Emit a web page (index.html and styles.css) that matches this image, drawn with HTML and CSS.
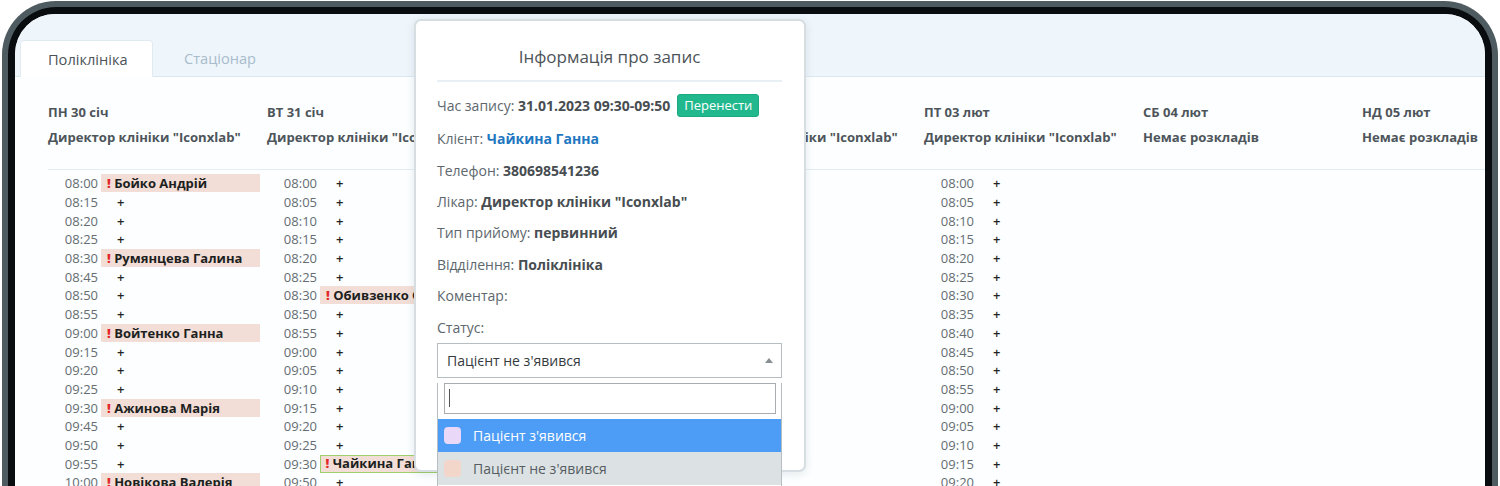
FILE: index.html
```html
<!DOCTYPE html>
<html lang="uk">
<head>
<meta charset="utf-8">
<title>Розклад</title>
<link rel="stylesheet" href="styles.css">
</head>
<body>
<div class="device">
  <div class="screen">
    <div class="tabs">
      <div class="tab active">Поліклініка</div>
      <div class="tab">Стаціонар</div>
    </div>

    <div class="schedule">
      <div class="head-row">
        <div class="day-head"><div class="day">ПН 30 січ</div><div class="doc">Директор клініки "Iconxlab"</div></div>
        <div class="day-head"><div class="day">ВТ 31 січ</div><div class="doc">Директор клініки "Iconxlab"</div></div>
        <div class="day-head"><div class="day">СР 01 лют</div><div class="doc">Директор клініки "Iconxlab"</div></div>
        <div class="day-head"><div class="day">ЧТ 02 лют</div><div class="doc">Директор клініки "Iconxlab"</div></div>
        <div class="day-head"><div class="day">ПТ 03 лют</div><div class="doc">Директор клініки "Iconxlab"</div></div>
        <div class="day-head"><div class="day">СБ 04 лют</div><div class="doc">Немає розкладів</div></div>
        <div class="day-head"><div class="day">НД 05 лют</div><div class="doc">Немає розкладів</div></div>
      </div>

      <div class="body-row">
        <div class="day-col">
          <div class="slot"><span class="time">08:00</span><span class="appt"><b class="warn">!</b> Бойко Андрій</span></div>
          <div class="slot"><span class="time">08:15</span><span class="free">+</span></div>
          <div class="slot"><span class="time">08:20</span><span class="free">+</span></div>
          <div class="slot"><span class="time">08:25</span><span class="free">+</span></div>
          <div class="slot"><span class="time">08:30</span><span class="appt"><b class="warn">!</b> Румянцева Галина</span></div>
          <div class="slot"><span class="time">08:45</span><span class="free">+</span></div>
          <div class="slot"><span class="time">08:50</span><span class="free">+</span></div>
          <div class="slot"><span class="time">08:55</span><span class="free">+</span></div>
          <div class="slot"><span class="time">09:00</span><span class="appt"><b class="warn">!</b> Войтенко Ганна</span></div>
          <div class="slot"><span class="time">09:15</span><span class="free">+</span></div>
          <div class="slot"><span class="time">09:20</span><span class="free">+</span></div>
          <div class="slot"><span class="time">09:25</span><span class="free">+</span></div>
          <div class="slot"><span class="time">09:30</span><span class="appt"><b class="warn">!</b> Ажинова Марія</span></div>
          <div class="slot"><span class="time">09:45</span><span class="free">+</span></div>
          <div class="slot"><span class="time">09:50</span><span class="free">+</span></div>
          <div class="slot"><span class="time">09:55</span><span class="free">+</span></div>
          <div class="slot"><span class="time">10:00</span><span class="appt"><b class="warn">!</b> Новікова Валерія</span></div>
        </div>
        <div class="day-col">
          <div class="slot"><span class="time">08:00</span><span class="free">+</span></div>
          <div class="slot"><span class="time">08:05</span><span class="free">+</span></div>
          <div class="slot"><span class="time">08:10</span><span class="free">+</span></div>
          <div class="slot"><span class="time">08:15</span><span class="free">+</span></div>
          <div class="slot"><span class="time">08:20</span><span class="free">+</span></div>
          <div class="slot"><span class="time">08:25</span><span class="free">+</span></div>
          <div class="slot"><span class="time">08:30</span><span class="appt"><b class="warn">!</b> Обивзенко Олег</span></div>
          <div class="slot"><span class="time">08:50</span><span class="free">+</span></div>
          <div class="slot"><span class="time">08:55</span><span class="free">+</span></div>
          <div class="slot"><span class="time">09:00</span><span class="free">+</span></div>
          <div class="slot"><span class="time">09:05</span><span class="free">+</span></div>
          <div class="slot"><span class="time">09:10</span><span class="free">+</span></div>
          <div class="slot"><span class="time">09:15</span><span class="free">+</span></div>
          <div class="slot"><span class="time">09:20</span><span class="free">+</span></div>
          <div class="slot"><span class="time">09:25</span><span class="free">+</span></div>
          <div class="slot"><span class="time">09:30</span><span class="appt selected"><b class="warn">!</b> Чайкина Ганна</span></div>
          <div class="slot"><span class="time">09:50</span><span class="free">+</span></div>
        </div>
        <div class="day-col">
          <div class="slot"><span class="time">08:00</span><span class="free">+</span></div>
          <div class="slot"><span class="time">08:05</span><span class="free">+</span></div>
          <div class="slot"><span class="time">08:10</span><span class="free">+</span></div>
        </div>
        <div class="day-col">
          <div class="slot"><span class="time">08:00</span><span class="free">+</span></div>
          <div class="slot"><span class="time">08:05</span><span class="free">+</span></div>
          <div class="slot"><span class="time">08:10</span><span class="free">+</span></div>
        </div>
        <div class="day-col">
          <div class="slot"><span class="time">08:00</span><span class="free">+</span></div>
          <div class="slot"><span class="time">08:05</span><span class="free">+</span></div>
          <div class="slot"><span class="time">08:10</span><span class="free">+</span></div>
          <div class="slot"><span class="time">08:15</span><span class="free">+</span></div>
          <div class="slot"><span class="time">08:20</span><span class="free">+</span></div>
          <div class="slot"><span class="time">08:25</span><span class="free">+</span></div>
          <div class="slot"><span class="time">08:30</span><span class="free">+</span></div>
          <div class="slot"><span class="time">08:35</span><span class="free">+</span></div>
          <div class="slot"><span class="time">08:40</span><span class="free">+</span></div>
          <div class="slot"><span class="time">08:45</span><span class="free">+</span></div>
          <div class="slot"><span class="time">08:50</span><span class="free">+</span></div>
          <div class="slot"><span class="time">08:55</span><span class="free">+</span></div>
          <div class="slot"><span class="time">09:00</span><span class="free">+</span></div>
          <div class="slot"><span class="time">09:05</span><span class="free">+</span></div>
          <div class="slot"><span class="time">09:10</span><span class="free">+</span></div>
          <div class="slot"><span class="time">09:15</span><span class="free">+</span></div>
          <div class="slot"><span class="time">09:20</span><span class="free">+</span></div>
        </div>
        <div class="day-col"></div>
        <div class="day-col"></div>
      </div>
    </div>

    <div class="modal">
      <h2 class="modal-title">Інформація про запис</h2>
      <div class="info-row first">Час запису:&nbsp;<b>31.01.2023 09:30-09:50</b><span class="btn-move">Перенести</span></div>
      <div class="info-row">Клієнт:&nbsp;<b class="link">Чайкина Ганна</b></div>
      <div class="info-row">Телефон:&nbsp;<b>380698541236</b></div>
      <div class="info-row">Лікар:&nbsp;<b>Директор клініки "Iconxlab"</b></div>
      <div class="info-row">Тип прийому:&nbsp;<b>первинний</b></div>
      <div class="info-row">Відділення:&nbsp;<b>Поліклініка</b></div>
      <div class="info-row">Коментар:</div>
      <div class="info-row">Статус:</div>
      <div class="select">
        <span>Пацієнт не з'явився</span>
        <span class="arrow"></span>
      </div>
      <div class="dropdown">
        <div class="search"><span class="caret"></span></div>
        <div class="option hl"><span class="swatch lav"></span>Пацієнт з'явився</div>
        <div class="option cur"><span class="swatch peach"></span>Пацієнт не з'явився</div>
      </div>
    </div>
  </div>
</div>
</body>
</html>
```

FILE: styles.css
```css
* { box-sizing: border-box; }
html, body { margin: 0; padding: 0; height: 486px; overflow: hidden; background: #ffffff; }
body { font-family: "Open Sans", "Noto Sans", sans-serif; }

.device {
  margin: 1px 2px 0;
  height: 620px;
  border: 6px solid #4e5b60;
  border-bottom: none;
  border-radius: 54px 54px 0 0;
  background: #0a0d10;
  padding: 7px 7px 0;
}
.screen {
  position: relative;
  height: 100%;
  border-radius: 40px 40px 0 0;
  overflow: hidden;
  background: #fcfeff;
}

.tabs {
  height: 63px;
  background: #eef5fb;
  border-bottom: 1px solid #dce8f0;
  display: flex;
  align-items: flex-end;
  padding-left: 5px;
}
.tab {
  height: 37px;
  margin-bottom: -1px;
  line-height: 36px;
  font-size: 14.6px;
  color: #a8bccb;
  padding: 0 28px 0 31px;
}
.tab.active {
  width: 133px;
  padding-left: 27px;
  background: #ffffff;
  color: #4b5358;
  border: 1px solid #e0eaf1;
  border-bottom-color: #ffffff;
  border-radius: 4px 4px 0 0;
}

.schedule { padding-left: 33px; }
.head-row, .body-row {
  display: grid;
  grid-template-columns: repeat(7, 219px);
}
.head-row {
  border-bottom: 1px solid #e3edf2;
  padding: 23px 0 19px;
}
.day-head { color: #4e555a; font-weight: 700; font-size: 13px; line-height: 25px; white-space: nowrap; }
.doc { font-size: 13.1px; }

.body-row { padding-top: 4px; }
.slot {
  display: flex;
  align-items: center;
  height: 18.7px;
  font-size: 13px;
}
.time { width: 50px; text-align: right; color: #656d72; padding-left: 16px; }
.free { margin-left: 3px; padding-left: 16px; color: #222; font-weight: 600; }
.appt {
  margin-left: 3px;
  width: 159px;
  height: 18px;
  line-height: 18px;
  padding-left: 6px;
  background: #f2ded6;
  color: #1d1f21;
  font-weight: 700;
  white-space: nowrap;
  overflow: hidden;
}
.appt.selected { border: 1.5px solid #9fcf6a; line-height: 15px; padding-left: 4.5px; }
.warn { color: #e3262a; }

.modal {
  position: absolute;
  left: 399px;
  top: 5px;
  width: 392px;
  height: 453px;
  background: #ffffff;
  border: 2px solid #d6dee2;
  border-radius: 7px;
  box-shadow: 0 2px 8px rgba(60, 80, 90, 0.12);
  padding: 0 22px 0 21px;
  color: #5d676d;
  font-size: 14px;
}
.modal-title {
  margin: 0;
  height: 61px;
  padding-top: 24px;
  line-height: 24px;
  text-align: center;
  font-size: 17px;
  font-weight: 500;
  color: #4d5459;
  border-bottom: 2px solid #e8f0f3;
}
.info-row {
  height: 31.4px;
  display: flex;
  align-items: center;
  white-space: nowrap;
}
.info-row.first { height: 35px; margin-top: 6px; }
.info-row b { color: #474d51; font-weight: 700; }
.info-row b.link { color: #1e77c0; }
.btn-move {
  margin-left: 7px;
  height: 23px;
  line-height: 21px;
  padding: 0 6px;
  background: #22b88e;
  border: 1px solid #1ca880;
  border-radius: 3px;
  color: #ffffff;
  font-size: 13px;
}

.select {
  height: 35px;
  border: 1px solid #b6bec2;
  display: flex;
  align-items: center;
  justify-content: space-between;
  padding: 0 8px 0 9px;
  color: #343a3e;
}
.arrow {
  width: 0; height: 0;
  border-left: 4px solid transparent;
  border-right: 4px solid transparent;
  border-bottom: 5px solid #888f93;
}
.dropdown {
  border: 1px solid #b6bec2;
  border-top: none;
  background: #ffffff;
  height: 120px;
}
.search {
  margin: 5px 5px 5px 6px;
  height: 31px;
  border: 1px solid #a9adb0;
  display: flex;
  align-items: center;
  padding-left: 4px;
}
.caret { width: 1px; height: 18px; background: #555; }
.option {
  height: 33px;
  display: flex;
  align-items: center;
  padding-left: 6px;
  font-size: 14px;
}
.option.hl { background: #4d9cf6; color: #ffffff; }
.option.cur { background: #dce2e4; color: #555d62; }
.swatch { width: 17px; height: 17px; border-radius: 4px; margin-right: 12px; }
.swatch.lav { background: #e9d8f7; }
.swatch.peach { background: #f3d6ca; }
```
